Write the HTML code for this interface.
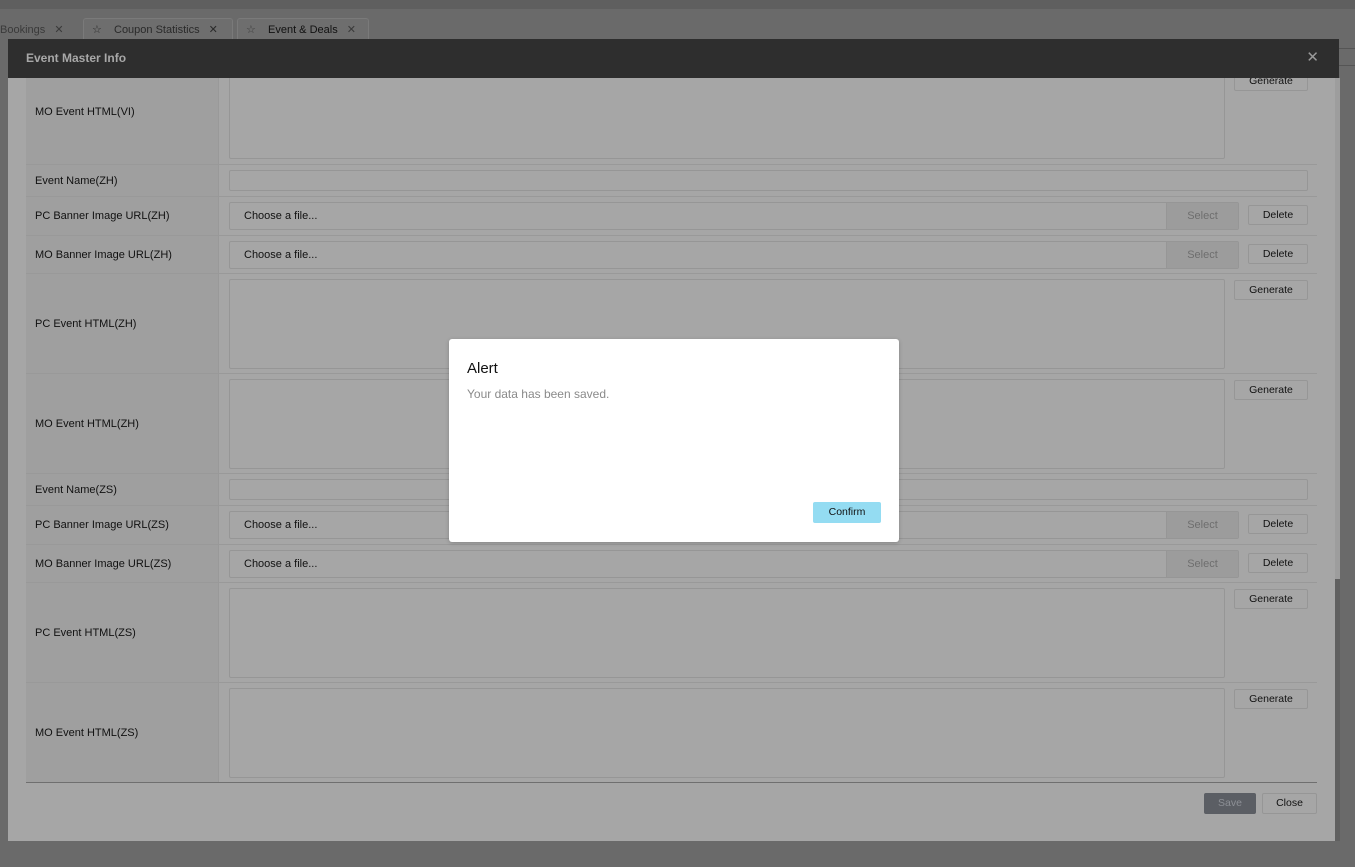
<!DOCTYPE html>
<html><head><meta charset="utf-8"><style>
*{box-sizing:border-box;margin:0;padding:0}
body{width:1355px;height:867px;background:#6a6a6a;font-family:"Liberation Sans",Arial,sans-serif;position:relative;overflow:hidden;font-size:11px;color:#111}
.abs{position:absolute}
.tab{position:absolute;top:18px;height:22px;border:1px solid #7a7a7a;border-bottom:none;background:#6e6e6e;color:#2a2a2a;font-size:11px;line-height:22px;padding-left:30px;border-radius:3px 3px 0 0}
.modal{position:absolute;left:8px;top:39px;width:1327px;height:802px;background:#a6a6a6}
.hdr{position:absolute;left:0;top:0;width:1331px;height:39px;background:#2e2e2e;color:#a8a8a8;font-weight:bold;font-size:12px;line-height:38px;padding-left:18px;z-index:3}
.row{position:absolute;left:18px;width:1291px;border-bottom:1px solid #999}
.lab{position:absolute;left:0;top:0;bottom:0;width:193px;background:#9f9f9f;border-right:1px solid #999;padding-left:9px;display:flex;align-items:center;font-size:11px;color:#111}
.inp{position:absolute;border:1px solid #969696;border-radius:2px;background:#a6a6a6}
.btn{position:absolute;border:1px solid #969696;border-radius:2px;background:#a6a6a6;font-size:10.5px;text-align:center;color:#111}
.file{font-size:11px;color:#111;padding-left:14px}
.sel{position:absolute;right:0;top:0;bottom:0;width:72px;background:#9c9c9c;border-left:1px solid #969696;color:#6e6e6e;text-align:center}
</style></head><body>
<div class="abs" style="left:0;top:0;width:1355px;height:9px;background:#5f5f5f"></div>
<div class="abs" style="left:0;top:18px;color:#3a3a3a;line-height:24px;font-size:11px">Bookings <span style="margin-left:6px">✕</span></div>
<div class="tab" style="left:83px;width:150px">Coupon Statistics <span style="margin-left:6px">✕</span><span class="abs" style="left:8px;top:0">☆</span></div>
<div class="tab" style="left:237px;width:132px;color:#111">Event &amp; Deals <span style="margin-left:6px;color:#3a3a3a">✕</span><span class="abs" style="left:8px;top:0;color:#3a3a3a">☆</span></div>
<div class="abs" style="left:1339px;top:48px;width:16px;height:1px;background:#555"></div>
<div class="abs" style="left:1339px;top:65px;width:16px;height:1px;background:#555"></div>
<div class="abs" style="left:1335px;top:78px;width:5px;height:501px;background:#9d9d9d"></div>
<div class="abs" style="left:1335px;top:579px;width:5px;height:262px;background:#606060"></div>
<div class="modal">
<div class="hdr">Event Master Info<span class="abs" style="right:20px;top:0;font-size:15px;font-weight:normal;color:#9a9a9a">✕</span></div>

<div class="row" style="top:20px;height:106px"><div class="lab">MO Event HTML(VI)</div><div class="inp" style="left:203px;top:0;width:996px;height:100px"></div><div class="btn" style="left:1208px;top:12px;width:74px;height:20px;line-height:18px">Generate</div></div>
<div class="row" style="top:126px;height:32px"><div class="lab">Event Name(ZH)</div><div class="inp" style="left:203px;top:5px;width:1079px;height:21px"></div></div>
<div class="row" style="top:158px;height:39px"><div class="lab">PC Banner Image URL(ZH)</div><div class="inp file" style="left:203px;top:5px;width:1010px;height:28px;line-height:26px">Choose a file...<div class="sel">Select</div></div><div class="btn" style="left:1222px;top:8px;width:60px;height:20px;line-height:18px">Delete</div></div>
<div class="row" style="top:197px;height:38px"><div class="lab">MO Banner Image URL(ZH)</div><div class="inp file" style="left:203px;top:5px;width:1010px;height:28px;line-height:26px">Choose a file...<div class="sel">Select</div></div><div class="btn" style="left:1222px;top:8px;width:60px;height:20px;line-height:18px">Delete</div></div>
<div class="row" style="top:235px;height:100px"><div class="lab">PC Event HTML(ZH)</div><div class="inp" style="left:203px;top:5px;width:996px;height:90px"></div><div class="btn" style="left:1208px;top:6px;width:74px;height:20px;line-height:18px">Generate</div></div>
<div class="row" style="top:335px;height:100px"><div class="lab">MO Event HTML(ZH)</div><div class="inp" style="left:203px;top:5px;width:996px;height:90px"></div><div class="btn" style="left:1208px;top:6px;width:74px;height:20px;line-height:18px">Generate</div></div>
<div class="row" style="top:435px;height:32px"><div class="lab">Event Name(ZS)</div><div class="inp" style="left:203px;top:5px;width:1079px;height:21px"></div></div>
<div class="row" style="top:467px;height:39px"><div class="lab">PC Banner Image URL(ZS)</div><div class="inp file" style="left:203px;top:5px;width:1010px;height:28px;line-height:26px">Choose a file...<div class="sel">Select</div></div><div class="btn" style="left:1222px;top:8px;width:60px;height:20px;line-height:18px">Delete</div></div>
<div class="row" style="top:506px;height:38px"><div class="lab">MO Banner Image URL(ZS)</div><div class="inp file" style="left:203px;top:5px;width:1010px;height:28px;line-height:26px">Choose a file...<div class="sel">Select</div></div><div class="btn" style="left:1222px;top:8px;width:60px;height:20px;line-height:18px">Delete</div></div>
<div class="row" style="top:544px;height:100px"><div class="lab">PC Event HTML(ZS)</div><div class="inp" style="left:203px;top:5px;width:996px;height:90px"></div><div class="btn" style="left:1208px;top:6px;width:74px;height:20px;line-height:18px">Generate</div></div>
<div class="row" style="top:644px;height:100px;border-bottom:1px solid #6f6f6f"><div class="lab">MO Event HTML(ZS)</div><div class="inp" style="left:203px;top:5px;width:996px;height:90px"></div><div class="btn" style="left:1208px;top:6px;width:74px;height:20px;line-height:18px">Generate</div></div>

<div class="abs" style="left:1196px;top:754px;width:52px;height:21px;background:#5b5e64;border-radius:2px;color:#8d9096;font-size:10.5px;text-align:center;line-height:21px">Save</div>
<div class="btn" style="left:1254px;top:754px;width:55px;height:21px;line-height:19px">Close</div>
</div>

<div class="abs" style="left:449px;top:339px;width:450px;height:203px;background:#fff;border-radius:3px;box-shadow:0 1px 4px rgba(0,0,0,.2)">
<div class="abs" style="left:18px;top:21px;font-size:15px;color:#111">Alert</div>
<div class="abs" style="left:18px;top:48px;font-size:12px;color:#8a8a8a">Your data has been saved.</div>
<div class="abs" style="left:364px;top:163px;width:68px;height:21px;background:#94dcf2;border-radius:2px;font-size:10.5px;text-align:center;line-height:21px;color:#111">Confirm</div>
</div>
</body></html>
